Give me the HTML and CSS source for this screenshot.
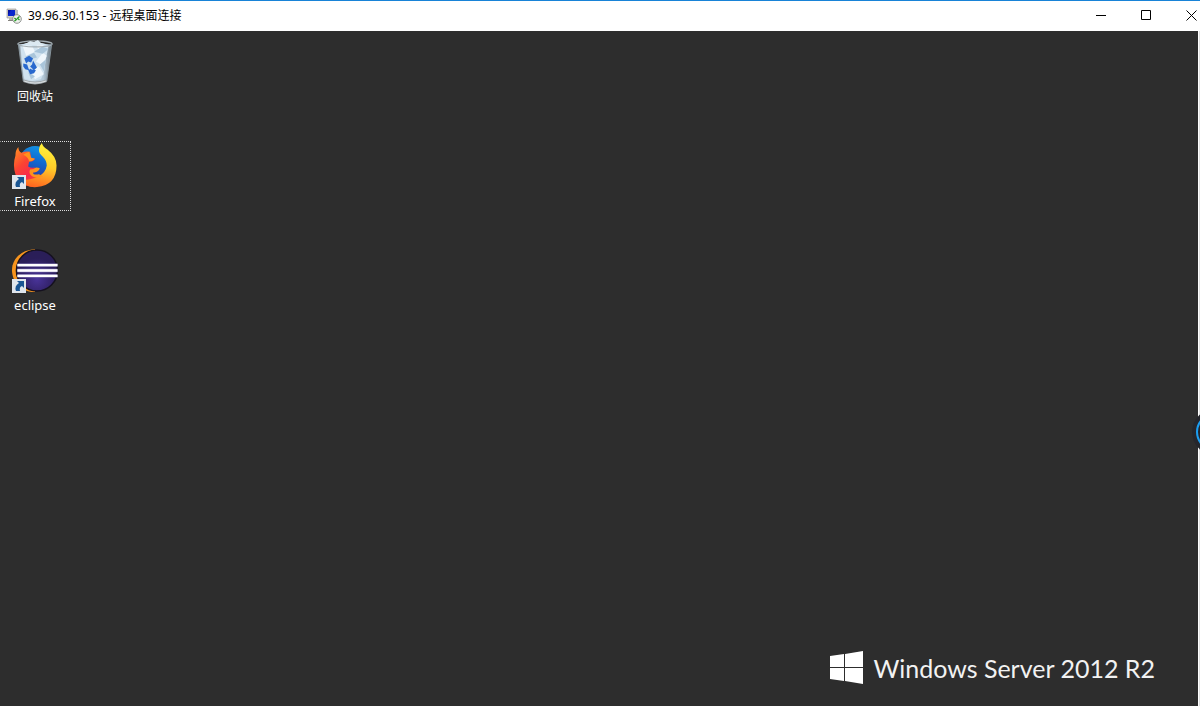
FILE: index.html
```html
<!DOCTYPE html>
<html lang="zh-CN">
<head>
    <meta charset="utf-8">
    <title>39.96.30.153 - 远程桌面连接</title>
    <link rel="stylesheet" href="styles.css">
</head>
<body>
    <header class="titlebar">
        <svg class="app-icon" viewBox="0 0 16 16">
            <path d="M1 1h9v9H1z" fill="#d5d2c8" stroke="#8d8c89" stroke-width=".6"/>
            <path d="M2 2h7v6H2z" fill="#0825ce"/>
            <path d="M2 2h3l-3 5z" fill="#0612a0"/>
            <path d="M9 2h3v7H9z" fill="#b9bac3"/>
            <path d="M3 10h5v2H3z" fill="#b8b5ac"/>
            <path d="M2 12h7v1H2z" fill="#85837e"/>
            <circle cx="11" cy="11" r="4.3" fill="#f0f2ee" stroke="#888b88" stroke-width=".9"/>
            <path d="M8.4 10l2 1.6-2 1.6M13.5 8.6l-2 1.7 2 1.7" fill="none" stroke="#269a25" stroke-width="1.3"/>
        </svg>
        <h1 class="title">39.96.30.153 - 远程桌面连接</h1>
        <div class="window-controls">
            <button class="control" aria-label="最小化">
                <svg viewBox="0 0 11 11"><path d="M0 5.5h10" /></svg>
            </button>
            <button class="control" aria-label="最大化">
                <svg viewBox="0 0 11 11"><path d="M.5.5h9v9h-9z" /></svg>
            </button>
            <button class="control" aria-label="关闭">
                <svg viewBox="0 0 11 11"><path d="M.5.5l10 10M10.5.5l-10 10" /></svg>
            </button>
        </div>
    </header>

    <main class="desktop">
        <div class="shortcuts">
            <a class="shortcut" href="#">
                <svg class="shortcut-icon" viewBox="0 0 48 48">
                    <defs>
                        <linearGradient id="bin" x1="0" x2="1">
                            <stop offset="0" stop-color="#8d9aa3"/>
                            <stop offset=".2" stop-color="#cbdce7"/>
                            <stop offset=".75" stop-color="#b3c7d6"/>
                            <stop offset="1" stop-color="#66747e"/>
                        </linearGradient>
                    </defs>
                    <path d="M7 5l5 38q12 5 24 0l5-38z" fill="url(#bin)"/>
                    <path d="M9 6l6-2 6 1 4-3 5 2 8 2-3 15-2 14-3 6-9 2-8-3-2-12z" fill="#d0e2ef"/>
                    <path d="M11 6l10 1 3 6-9 4zM25 3l8 4-5 7zM32 14l4 3-4 10-7-4zM19 31l9-3 5 8-9 5z" fill="#eff6fb"/>
                    <path d="M23 13l8-5 7 2-6 5zM29 26l6-5-2 12zM14 18l9-4 3 5-8 2zM17 34l7 4-4 3z" fill="#a9c5da"/>
                    <ellipse cx="24" cy="5" rx="17.5" ry="3" fill="none" stroke="#a3adb3" stroke-width="1.2"/>
                    <path d="M14 5l5-3 4 1 4-2 3 3 5 1-7 2-7-1z" fill="#dce9f1"/>
                    <path d="M12 41q12 5 24 0v3q-12 5-24 0z" fill="#a0a7ac"/>
                    <path d="M13 43q11 4 22 0" fill="none" stroke="#e0e5e7"/>
                    <path d="M7 5l5 38M41 5l-5 38" stroke="#87949d"/>
                    <path d="M13 20l5-3 4 3-2 4-3-1-2 2zM22 22l4 7-3 3-4-4 2-2zM12 25l4 1 2 6-4-1-2-3zM17 32l3-2v1l5 1-2 3-4 1z" fill="#2868ce"/>
                </svg>
                <span class="shortcut-label">回收站</span>
            </a>
            <a class="shortcut focused" href="#">
                <svg class="shortcut-icon" viewBox="0 0 48 48">
                    <defs>
                        <linearGradient id="fox" x1=".1" y1=".1" x2=".8" y2="1">
                            <stop offset="0" stop-color="#ff7f26"/>
                            <stop offset=".3" stop-color="#fb4432"/>
                            <stop offset=".6" stop-color="#f8294e"/>
                            <stop offset="1" stop-color="#ff6a1c"/>
                        </linearGradient>
                        <linearGradient id="tail" x1=".6" y1="0" x2=".4" y2="1">
                            <stop offset="0" stop-color="#fff33b"/>
                            <stop offset=".5" stop-color="#ffcc29"/>
                            <stop offset="1" stop-color="#ff651f"/>
                        </linearGradient>
                        <linearGradient id="globe" x1=".7" y1="0" x2=".4" y2="1">
                            <stop offset="0" stop-color="#1295e4"/>
                            <stop offset=".5" stop-color="#1168cf"/>
                            <stop offset="1" stop-color="#2e3da0"/>
                        </linearGradient>
                    </defs>
                    <circle cx="24" cy="19" r="16" fill="url(#globe)"/>
                    <path d="M7 4q0 4 3 6 5-2 9-1l1 6 4 1q-1 3-6 3l-1 5q3 2 6 1 3 1 5 2-2 3-7 3-1 3 3 3 3 1 6 0l7 5-12 7Q9 45 4 32 1 22 4 13q0-6 3-9z" fill="url(#fox)"/>
                    <path d="M31 0q1 4 6 7 9 7 9 16 0 20-20 22-11 1-18-7 12 0 20-4 7-4 8-11 0-5-4-9-4-3-4-7 0-4 3-7z" fill="url(#tail)"/>
                    <path d="M18 9l2 6 4 1q-3 3-6 3-1-5-6-7 3-2 6-3zM19 27q4 0 6-2 3 0 4 1-2 4-7 4 0 3 6 2l4 2q-6 3-11 0-4-3-2-7z" fill="#ff931c"/>
                </svg>
                <svg class="shortcut-arrow" viewBox="0 0 14 14">
                    <path d="M0 0h14v14H0z" fill="#dfe5ec"/>
                    <path d="M5 2h7v7l-2-2q-3 1-2 5H4Q2 7 7 4z" fill="#195593"/>
                </svg>
                <span class="shortcut-label latin">Firefox</span>
            </a>
            <a class="shortcut" href="#">
                <svg class="shortcut-icon" viewBox="0 0 48 48">
                    <defs>
                        <radialGradient id="moon" cy=".7">
                            <stop offset="0" stop-color="#49349a"/>
                            <stop offset=".55" stop-color="#382675"/>
                            <stop offset="1" stop-color="#2a1e58"/>
                        </radialGradient>
                    </defs>
                    <path d="M24 2Q5 4 1 19c-3 14 8 27 23 27z" fill="#f7941e"/>
                    <circle cx="26" cy="24" r="21" fill="url(#moon)" stroke="#15111f" stroke-width="1.5"/>
                    <path d="M6 18.5h41M6 24h41M6 29.5h41" stroke="#8c82b5" stroke-width="3.4"/>
                    <path d="M6 18.5h41M6 24h41M6 29.5h41" stroke="#fff" stroke-width="2.4"/>
                </svg>
                <svg class="shortcut-arrow" viewBox="0 0 14 14">
                    <path d="M0 0h14v14H0z" fill="#dfe5ec"/>
                    <path d="M5 2h7v7l-2-2q-3 1-2 5H4Q2 7 7 4z" fill="#195593"/>
                </svg>
                <span class="shortcut-label latin">eclipse</span>
            </a>
        </div>
        <div class="brand">
            <svg class="brand-logo" viewBox="0 0 33 34">
                <path d="M0 5l14-2v13H0zM15 3l18-3v16H15zM0 17h14v13L0 28zM15 17h18v16l-18-3z" fill="#fff"/>
            </svg>
            <span class="brand-name">Windows Server 2012 R2</span>
        </div>
        <div class="side-widget"></div>
    </main>
</body>
</html>
```

FILE: styles.css
```css
* {
    box-sizing: border-box;
}

body {
    margin: 0;
    min-height: 100vh;
    display: flex;
    flex-direction: column;
    overflow: hidden;
    background: #fff;
    font-family: "Noto Sans", "Noto Sans CJK SC", sans-serif;
    font-size: 12px;
}

.titlebar {
    display: flex;
    align-items: center;
    height: 31px;
    padding-left: 6px;
    border-top: 1px solid #1883d7;
    background: #fff;
    color: #000;
}

.app-icon {
    width: 16px;
    height: 16px;
    margin-right: 6px;
}

.title {
    margin: 0;
    font-size: 12px;
    font-weight: 400;
    line-height: 16px;
}

.window-controls {
    display: flex;
    align-self: stretch;
    margin-left: auto;
    /* the close button runs past the window edge */
    margin-right: -14px;
}

.control {
    display: flex;
    align-items: center;
    justify-content: center;
    width: 45px;
    padding: 0 0 2px;
    border: 0;
    background: none;
}

.control svg {
    width: 11px;
    height: 11px;
    fill: none;
    stroke: #000;
    stroke-width: 1;
}

.desktop {
    position: relative;
    flex: 1;
    display: flex;
    justify-content: space-between;
    margin-right: 2px;
    background: #2d2d2d;
    box-shadow: 1px 0 #fff, 2px 0 #e2e2e2;
}

.shortcuts {
    display: flex;
    flex-direction: column;
    gap: 34px;
    padding-top: 6px;
}

.shortcut {
    position: relative;
    display: flex;
    flex-direction: column;
    align-items: center;
    width: 71px;
    height: 70px;
    padding: 1px 1px 0 0;
    border: 1px solid transparent;
    color: #fff;
    text-decoration: none;
}

.shortcut.focused {
    border: 1px dotted #ddd;
    border-left-color: transparent;
}

.shortcut-icon {
    width: 48px;
    height: 48px;
}

.shortcut-arrow {
    position: absolute;
    left: 11px;
    bottom: 21px;
    width: 14px;
    height: 14px;
}

.shortcut-label {
    margin-top: 2px;
    line-height: 18px;
}

.shortcut-label.latin {
    font-size: 13px;
}

.brand {
    display: flex;
    align-items: center;
    align-self: flex-end;
    gap: 10px;
    margin-right: 43px;
    margin-bottom: 20px;
    color: #f2f2f2;
}

.brand-logo {
    width: 33px;
    height: 34px;
}

.brand-name {
    font-family: Lato, "Open Sans", sans-serif;
    font-size: 25px;
    line-height: 36px;
}

/* docked ball, mostly off screen */
.side-widget {
    position: absolute;
    top: 382px;
    right: -36px;
    width: 38px;
    height: 38px;
    border: 2px solid #1b9df0;
    border-radius: 50%;
    background: #25262c;
    box-shadow: 0 0 0 4px #25262c;
}
```
